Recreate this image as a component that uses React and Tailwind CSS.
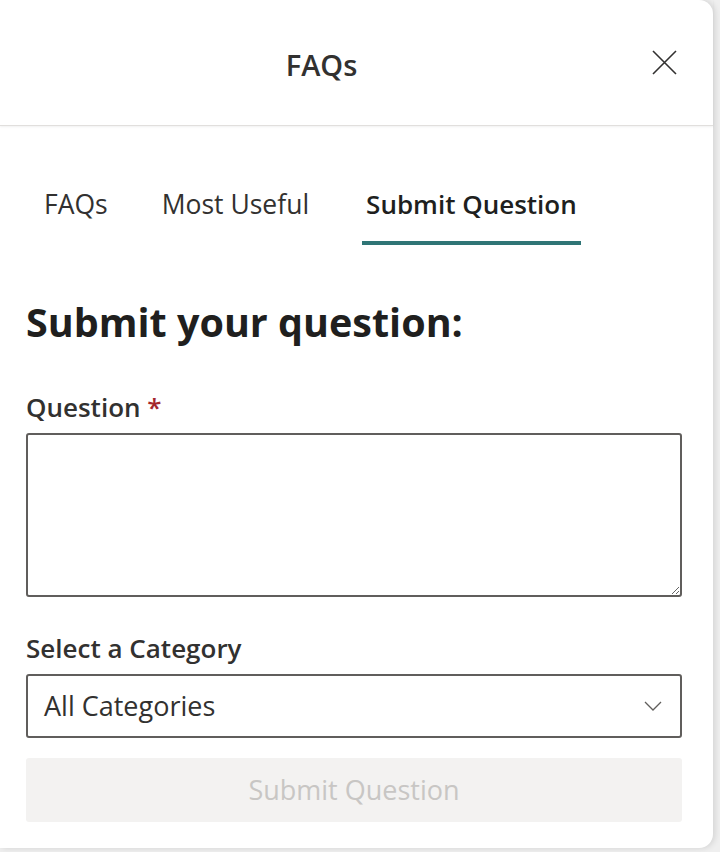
export default function App() {
  const tabs = [
    { label: 'FAQs', active: false, extra: '' },
    { label: 'Most Useful', active: false, extra: '' },
    { label: 'Submit Question', active: true, extra: 'ml-[3px] text-[26px]' },
  ]

  return (
    <div className="min-h-[852px] w-[720px] bg-[#efefef]" style={{ fontFamily: '"Open Sans", "Noto Sans", sans-serif' }}>
      <div className="w-[713px] rounded-r-[14px] bg-white pb-[26px] shadow-[2px_0_6px_rgba(0,0,0,0.12)]">
        {/* Header */}
        <div className="relative flex h-[126px] items-center justify-center border-b border-[#e1dfdd] shadow-[0_1px_2px_rgba(0,0,0,0.06)]">
          <h2 className="mr-[70px] mt-[4px] text-[29px] font-semibold text-[#323130]">FAQs</h2>
          <button className="absolute right-[36px] top-[50px] text-[#323130]">
            <svg width="25" height="25" viewBox="0 0 25 25" fill="none" stroke="currentColor" strokeWidth="1.6">
              <path d="M1 1L24 24M24 1L1 24" />
            </svg>
          </button>
        </div>

        <div className="pl-[26px] pr-[31px]">
          {/* Tabs */}
          <div className="flex gap-[46px] pl-[14px] pt-[55px]">
            {tabs.map((t) => (
              <button
                key={t.label}
                className={`flex h-[64px] flex-col border-b-4 px-[4px] leading-[46px] ${t.extra || 'text-[26.5px]'} ${
                  t.active ? 'border-[#2f7576] font-semibold text-[#201f1e]' : 'border-transparent text-[#323130]'
                }`}
              >
                {t.label}
              </button>
            ))}
          </div>

          <h1 className="mt-[53px] text-[39.5px] font-bold leading-[48px] text-[#201f1e]">Submit your question:</h1>

          <label className="mt-[44px] block text-[26px] font-semibold leading-[34px] text-[#323130]">
            Question <span className="text-[#a4262c]">*</span>
          </label>
          <textarea className="mt-[9px] block h-[164px] w-full resize-y rounded-[3px] border-2 border-[#605e5c] bg-white outline-none" />

          <label className="mt-[34px] block text-[26px] font-semibold leading-[34px] text-[#323130]">Select a Category</label>
          <div className="mt-[9px] flex h-[64px] items-center justify-between rounded-[3px] border-2 border-[#605e5c] pl-[16px] pr-[18px]">
            <span className="text-[27px] text-[#323130]">All Categories</span>
            <svg width="18" height="10" viewBox="0 0 18 10" fill="none" stroke="#605e5c" strokeWidth="1.3">
              <path d="M1 1L9 9L17 1" />
            </svg>
          </div>

          <button
            disabled
            className="mt-[20px] flex h-[64px] w-full items-center justify-center rounded-[3px] bg-[#f3f2f1] text-[27px] text-[#c8c6c4]"
          >
            Submit Question
          </button>
        </div>
      </div>
    </div>
  )
}
